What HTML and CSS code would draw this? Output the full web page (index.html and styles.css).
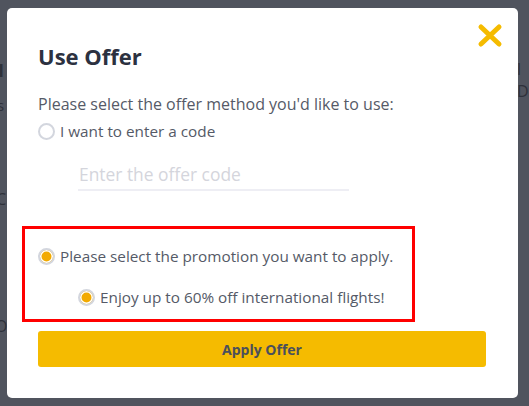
FILE: index.html
```html
<!DOCTYPE html>
<html>
<head>
<meta charset="utf-8">
<link rel="stylesheet" href="styles.css">
</head>
<body>
<div class="page">
  <span class="bg bg-1">1</span>
  <span class="bg bg-s">s</span>
  <span class="bg bg-c">C</span>
  <span class="bg bg-o">O</span>
  <span class="bg bg-d">l D</span>
  <div class="modal">
    <button class="close" aria-label="Close">
      <svg width="26" height="25" viewBox="0 0 26 25"><path d="M4 4 L22 21 M22 4 L4 21" stroke="#f5bb00" stroke-width="5" stroke-linecap="round" fill="none"/></svg>
    </button>
    <h1 class="title">Use Offer</h1>
    <p class="lead">Please select the offer method you'd like to use:</p>
    <label class="option first">
      <span class="radio"></span>
      <span>I want to enter a code</span>
    </label>
    <div class="code-field">
      <input class="code-input" type="text" placeholder="Enter the offer code">
    </div>
    <div class="promo-box">
      <label class="option">
        <span class="radio checked"></span>
        <span>Please select the promotion you want to apply.</span>
      </label>
      <label class="option sub">
        <span class="radio checked"></span>
        <span>Enjoy up to 60% off international flights!</span>
      </label>
    </div>
    <button class="apply">Apply Offer</button>
  </div>
</div>
</body>
</html>
```
FILE: styles.css
```css
html, body {
  margin: 0;
  padding: 0;
}
body {
  background: #50545e;
  font-family: "Open Sans", "Noto Sans", sans-serif;
  width: 529px;
  height: 406px;
  overflow: hidden;
}
.page {
  position: relative;
  width: 529px;
  height: 406px;
  padding-top: 8px;
  padding-left: 7px;
  box-sizing: border-box;
}
.bg {
  position: absolute;
  color: #2e313a;
  font-size: 16px;
}
.bg-1 { left: -5px; top: 58px; font-weight: 700; font-size: 18px; }
.bg-s { left: -3px; top: 95px; font-size: 15px; }
.bg-c { left: -4px; top: 188px; }
.bg-o { left: -5px; top: 315px; }
.bg-d { left: 517px; top: 58px; }
.modal {
  position: relative;
  width: 511px;
  height: 390px;
  background: #fff;
  border-radius: 5px;
  box-sizing: border-box;
  padding: 33px 32px 0 31px;
}
.close {
  position: absolute;
  right: 15px;
  top: 15px;
  border: 0;
  background: none;
  padding: 0;
  width: 26px;
  height: 25px;
}
.close svg { display: block; }
.title {
  margin: 0;
  font-size: 22px;
  font-weight: 700;
  color: #2c3140;
  line-height: 30px;
}
.lead {
  margin: 21px 0 0 0;
  font-size: 16px;
  color: #555a67;
  line-height: 24px;
}
.option {
  display: flex;
  align-items: center;
  gap: 5px;
  font-size: 15.3px;
  color: #555a67;
  line-height: 22px;
}
.option.first {
  margin-top: 4px;
}
.radio {
  width: 17px;
  height: 17px;
  box-sizing: border-box;
  border: 2px solid #d3d6de;
  border-radius: 50%;
  background: #fff;
  flex: none;
}
.radio.checked {
  background: #f2aa00;
  box-shadow: inset 0 0 0 1.5px #fff;
}
.code-field {
  padding: 18px 0 0 40px;
}
.code-input {
  display: block;
  width: 270px;
  border: 0;
  border-bottom: 2px solid #eeeef4;
  font-family: "Open Sans", sans-serif;
  font-size: 17.4px;
  padding: 2px 0 3px 1px;
  outline: none;
  color: #555a67;
}
.code-input::placeholder {
  color: #d4d5dc;
}
.promo-box {
  margin: 35px 0 0 -16px;
  width: 393px;
  height: 96px;
  box-sizing: border-box;
  border: 3px solid #ff0000;
  padding: 16px 0 0 13px;
}
.option.sub {
  margin: 19px 0 0 40px;
}
.apply {
  display: block;
  margin-top: 9px;
  width: 448px;
  height: 36px;
  border: 0;
  border-radius: 3px;
  background: #f5bb00;
  color: #4a4f5c;
  font-family: "Open Sans", sans-serif;
  font-weight: 700;
  font-size: 14px;
}
```
